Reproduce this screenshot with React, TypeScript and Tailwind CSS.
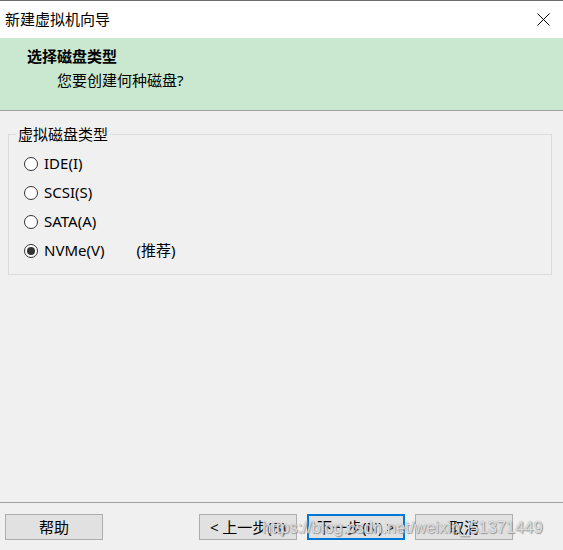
import { useState } from "react"

const FONT = { fontFamily: '"Noto Sans", "Noto Sans CJK SC", sans-serif' }

type Kind = "ide" | "scsi" | "sata" | "nvme"

const options: { id: Kind; label: string; note?: string }[] = [
  { id: "ide", label: "IDE(I)" },
  { id: "scsi", label: "SCSI(S)" },
  { id: "sata", label: "SATA(A)" },
  { id: "nvme", label: "NVMe(V)", note: "(推荐)" },
]

function Radio({ checked }: { checked: boolean }) {
  return (
    <span className="w-[14px] h-[14px] rounded-full border border-[#333333] bg-white flex items-center justify-center shrink-0">
      {checked && <span className="w-[8px] h-[8px] rounded-full bg-[#333333]" />}
    </span>
  )
}

function WinButton({ children, primary }: { children: React.ReactNode; primary?: boolean }) {
  return (
    <button
      className={
        primary
          ? "w-[98px] h-[26px] bg-[#e1e1e1] border-2 border-[#0078d7] text-[15px] text-black leading-none"
          : "w-[98px] h-[26px] bg-[#e1e1e1] border border-[#adadad] text-[15px] text-black leading-none"
      }
    >
      {children}
    </button>
  )
}

export default function App() {
  const [kind, setKind] = useState<Kind>("nvme")

  return (
    <div className="w-[563px] h-[550px] flex flex-col bg-[#f0f0f0] text-black relative overflow-hidden" style={FONT}>
      {/* Title bar */}
      <div className="h-[38px] bg-white border-t border-[#6e6e6e] flex items-center justify-between pl-[5px] pr-[13px]">
        <span className="text-[15px] leading-none">新建虚拟机向导</span>
        <svg width="13" height="13" viewBox="0 0 13 13" className="text-black">
          <path d="M0.5 0.5 L12.5 12.5 M12.5 0.5 L0.5 12.5" stroke="currentColor" strokeWidth="1" />
        </svg>
      </div>

      {/* Header */}
      <div className="h-[73px] bg-[#cae8cf] border-b border-[#a0a0a0] pl-[27px] pt-[8px]">
        <div className="text-[15px] font-bold leading-[20px]">选择磁盘类型</div>
        <div className="text-[15px] leading-[20px] pl-[30px] mt-[4px]">您要创建何种磁盘?</div>
      </div>

      {/* Content */}
      <div className="flex-1 pl-[8px] pr-[11px] pt-[16px]">
        <fieldset className="border border-[#dcdcdc] pb-[9px]">
          <legend className="ml-[7px] px-[2px] text-[15px] leading-[15px]">虚拟磁盘类型</legend>
          <div className="pt-[7px] pl-[15px] flex flex-col">
            {options.map(o => (
              <label
                key={o.id}
                className="h-[29px] flex items-center gap-[6px] text-[15px] cursor-default"
                onClick={() => setKind(o.id)}
              >
                <Radio checked={kind === o.id} />
                <span className="leading-none">{o.label}</span>
                {o.note && <span className="leading-none ml-[26px]">{o.note}</span>}
              </label>
            ))}
          </div>
        </fieldset>
      </div>

      {/* Footer */}
      <div className="h-[48px] border-t border-[#a0a0a0] pt-[11px] pl-[5px] pr-[50px] flex items-start justify-between">
        <WinButton>帮助</WinButton>
        <div className="flex gap-[10px]">
          <WinButton>&lt; 上一步(B)</WinButton>
          <WinButton primary>下一步(N) &gt;</WinButton>
          <WinButton>取消</WinButton>
        </div>
      </div>

      {/* watermark */}
      <div
        className="absolute left-[262px] top-[515px] text-[16.5px] text-white/70 pointer-events-none whitespace-nowrap"
        style={{ fontFamily: '"Liberation Sans", sans-serif', textShadow: "0 0 1px #888, 1px 1px 1px #999" }}
      >
        https://blog.csdn.net/weixin_51371449
      </div>
    </div>
  )
}
